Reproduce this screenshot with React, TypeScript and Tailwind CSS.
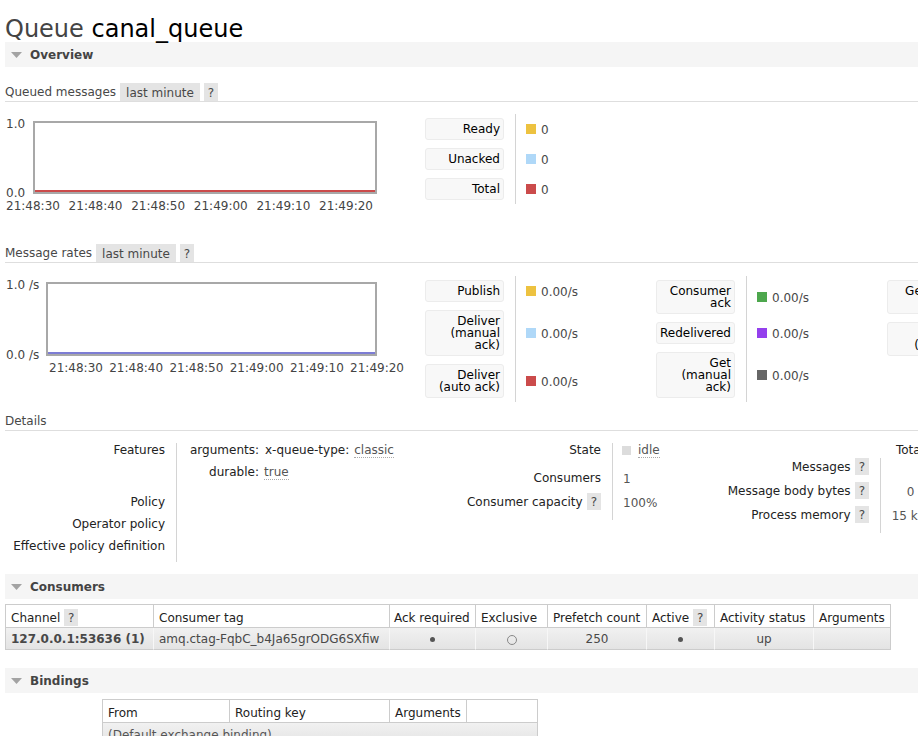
import React from 'react'

const times = ['21:48:30', '21:48:40', '21:48:50', '21:49:00', '21:49:10', '21:49:20']

function SectionHeader({ title }: { title: string }) {
  return (
    <div className="flex items-center h-[25px] bg-[#f5f5f5] pl-[6px] font-bold text-[#444]">
      <svg width="11" height="6" className="mr-[8px]">
        <polygon points="0,0 11,0 5.5,6" fill="#a3a3a3" />
      </svg>
      {title}
    </div>
  )
}

function Tag({ children, wide }: { children: React.ReactNode; wide?: boolean }) {
  return (
    <span
      className={
        wide
          ? 'inline-block h-[18px] leading-[20px] bg-[#e4e4e4] px-[6px]'
          : 'inline-block h-[18px] leading-[20px] bg-[#e4e4e4] px-[4px]'
      }
    >
      {children}
    </span>
  )
}

function Help() {
  return <span className="inline-block h-[17px] leading-[18px] bg-[#e4e4e4] px-[4px] text-[#484848] font-normal">?</span>
}

function SubHeading({ label, tags }: { label: string; tags?: boolean }) {
  return (
    <div className="flex items-center gap-[4px] h-[19px] leading-[19px] border-b border-[#dedede] pb-px">
      <span className="translate-y-[1px]">{label}</span>
      {tags && (
        <>
          <Tag wide>last minute</Tag>
          <Tag>?</Tag>
        </>
      )}
    </div>
  )
}

function LegendButton({ lines }: { lines: string[] }) {
  return (
    <div className="w-[79px] rounded-[3px] bg-[#f8f8f8] border border-[#ececec] text-right pr-[3px] py-[4px] leading-[12px] text-black whitespace-nowrap">
      {lines.map((l) => (
        <div key={l} className="h-[12px] leading-[13px]">
          {l}
        </div>
      ))}
    </div>
  )
}

type Item = { lines: string[]; color: string; value: string }

function LegendColumn({ items }: { items: Item[] }) {
  return (
    <div className="flex flex-col w-[231px] shrink-0">
      {items.map((it) => (
        <div key={it.lines.join(' ')} className="flex items-stretch">
          <div className="py-[4px] pr-[11px]">
            <LegendButton lines={it.lines} />
          </div>
          <div className="flex items-center gap-[5px] border-l border-[#d4d4d4] pl-[10px] flex-1">
            <span className="w-[10px] h-[10px]" style={{ backgroundColor: it.color }} />
            <span className="leading-[14px] pt-px">{it.value}</span>
          </div>
        </div>
      ))}
    </div>
  )
}

function QueuedChart() {
  return (
    <div className="relative w-[420px] h-[100px] shrink-0 text-[#444]">
      <span className="absolute left-[1px] top-[4px] leading-[12px]">1.0</span>
      <div className="absolute left-[28px] top-[7px] w-[344px] h-[73px] border-2 border-[#a8a8a8] bg-white">
        <div className="absolute left-0 right-0 bottom-0 h-[2px] bg-[#cb4b4b]" />
      </div>
      <span className="absolute left-[1px] top-[73px] leading-[12px]">0.0</span>
      <div className="absolute left-[1px] top-[86px] w-[367px] flex justify-between leading-[12px]">
        {times.map((t) => (
          <span key={t}>{t}</span>
        ))}
      </div>
    </div>
  )
}

function RatesChart() {
  return (
    <div className="relative w-[420px] h-[100px] shrink-0 text-[#444]">
      <span className="absolute left-[1px] top-[3px] leading-[12px]">1.0 /s</span>
      <div className="absolute left-[41px] top-[6px] w-[331px] h-[74px] border-2 border-[#a8a8a8] bg-white">
        <div className="absolute left-0 right-0 bottom-0 h-[2px] bg-[#7d7dd4]" />
      </div>
      <span className="absolute left-[1px] top-[73px] leading-[12px]">0.0 /s</span>
      <div className="absolute left-[44px] top-[86px] w-[355px] flex justify-between leading-[12px]">
        {times.map((t) => (
          <span key={t}>{t}</span>
        ))}
      </div>
    </div>
  )
}

function Dotted({ children }: { children: React.ReactNode }) {
  return <span className="border-b border-dotted border-[#aaa] leading-[14px] text-[#555]">{children}</span>
}

function Details() {
  return (
    <div className="flex mt-[12px]">
      {/* features / policies */}
      <div className="w-[435px] shrink-0 flex flex-col text-[#222]">
        <div className="flex h-[48px]">
          <div className="w-[171px] text-right pr-[11px] leading-[14px]">Features</div>
          <div className="border-l border-[#d4d4d4] pl-[12px] leading-[14px]">
            <div className="flex">
              <span className="w-[70px] text-right">arguments:</span>
              <span className="ml-[6px]">x-queue-type:</span>
              <span className="ml-[5px]">
                <Dotted>classic</Dotted>
              </span>
            </div>
            <div className="flex mt-[8px]">
              <span className="w-[70px] text-right">durable:</span>
              <span className="ml-[5px]">
                <Dotted>true</Dotted>
              </span>
            </div>
          </div>
        </div>
        {['Policy', 'Operator policy', 'Effective policy definition'].map((l, i) => (
          <div key={l} className={i === 2 ? 'flex h-[27px]' : 'flex h-[22px]'}>
            <div className="w-[171px] text-right pr-[11px] leading-[23px]">{l}</div>
            <div className="border-l border-[#d4d4d4] flex-1" />
          </div>
        ))}
      </div>

      {/* state */}
      <div className="w-[240px] shrink-0 flex flex-col text-[#222]">
        <div className="flex h-[28px]">
          <div className="w-[172px] text-right pr-[11px] leading-[14px]">State</div>
          <div className="border-l border-[#d4d4d4] pl-[9px] flex items-start gap-[7px] flex-1">
            <span className="w-[9px] h-[9px] mt-[3px] bg-[#dcdcdc]" />
            <Dotted>idle</Dotted>
          </div>
        </div>
        <div className="flex h-[22px]">
          <div className="w-[172px] text-right pr-[11px] leading-[14px]">Consumers</div>
          <div className="border-l border-[#d4d4d4] pl-[10px] flex-1 leading-[16px] text-[#555]">1</div>
        </div>
        <div className="flex h-[27px]">
          <div className="w-[172px] flex justify-end items-start gap-[4px] pr-[11px]">
            <span className="leading-[19px]">Consumer capacity</span>
            <Help />
          </div>
          <div className="border-l border-[#d4d4d4] pl-[10px] flex-1 leading-[21px] text-[#555]">100%</div>
        </div>
      </div>

      {/* totals */}
      <div className="w-[260px] shrink-0 flex flex-col text-[#222]">
        <div className="flex h-[15px]">
          <div className="w-[200px]" />
          <div className="w-[60px] text-center leading-[14px]">Total</div>
        </div>
        {[
          ['Messages', ''],
          ['Message body bytes', '0'],
          ['Process memory', '15 kiB'],
        ].map(([l, v], i) => (
          <div key={l} className={i === 2 ? 'flex h-[27px]' : 'flex h-[24px]'}>
            <div className="w-[200px] flex justify-end items-start gap-[4px] pr-[11px]">
              <span className="leading-[18px]">{l}</span>
              <Help />
            </div>
            <div className="w-[60px] border-l border-[#d4d4d4] text-center leading-[21px] text-[#555]">{v}</div>
          </div>
        ))}
      </div>
    </div>
  )
}

function Dot() {
  return <span className="inline-block w-[5px] h-[5px] rounded-full bg-[#555] align-middle" />
}

function Ring() {
  return <span className="inline-block w-[10px] h-[10px] rounded-full border border-[#888] align-middle" />
}

function ConsumersTable() {
  const th =
    'border-r border-b border-[#cccccc] font-normal text-left px-[5px] pt-[3px] h-[23px] text-[#222] whitespace-nowrap'
  const td =
    'border-r border-b border-r-[#f7f7f7] border-b-[#cccccc] h-[22px] px-[5px] pt-px text-[#484848] whitespace-nowrap'
  return (
    <table className="mt-[5px] border-separate border-spacing-0 table-fixed w-[885px] border-l border-t border-[#cccccc]">
      <colgroup>
        <col className="w-[148px]" />
        <col className="w-[236px]" />
        <col className="w-[86px]" />
        <col className="w-[72px]" />
        <col className="w-[99px]" />
        <col className="w-[68px]" />
        <col className="w-[99px]" />
        <col className="w-[77px]" />
      </colgroup>
      <thead>
        <tr>
          <th className={th}>
            Channel <Help />
          </th>
          <th className={th}>Consumer tag</th>
          <th className={th + ' !px-[4px]'}>Ack required</th>
          <th className={th}>Exclusive</th>
          <th className={th}>Prefetch count</th>
          <th className={th}>
            Active <Help />
          </th>
          <th className={th}>Activity status</th>
          <th className={th}>Arguments</th>
        </tr>
      </thead>
      <tbody className="bg-gradient-to-b from-[#f1f1f1] to-[#e3e3e3]">
        <tr>
          <td className={td + ' font-bold text-[#222]'}>127.0.0.1:53636 (1)</td>
          <td className={td}>amq.ctag-FqbC_b4Ja65grODG6SXfiw</td>
          <td className={td + ' text-center'}>
            <Dot />
          </td>
          <td className={td + ' text-center'}>
            <Ring />
          </td>
          <td className={td + ' text-center'}>250</td>
          <td className={td + ' text-center'}>
            <Dot />
          </td>
          <td className={td + ' text-center'}>up</td>
          <td className="border-r border-b border-[#cccccc] h-[22px]" />
        </tr>
      </tbody>
    </table>
  )
}

function BindingsTable() {
  const th =
    'border-r border-b border-[#cccccc] font-normal text-left px-[5px] pt-[3px] h-[23px] text-[#222] whitespace-nowrap'
  return (
    <table className="mt-[6px] ml-[97px] border-separate border-spacing-0 table-fixed w-[435px] border-l border-t border-[#cccccc]">
      <colgroup>
        <col className="w-[127px]" />
        <col className="w-[160px]" />
        <col className="w-[77px]" />
        <col className="w-[71px]" />
      </colgroup>
      <thead>
        <tr>
          <th className={th}>From</th>
          <th className={th}>Routing key</th>
          <th className={th}>Arguments</th>
          <th className={th} />
        </tr>
      </thead>
      <tbody className="bg-gradient-to-b from-[#f1f1f1] to-[#e3e3e3]">
        <tr>
          <td colSpan={4} className="border-r border-b border-[#cccccc] h-[22px] px-[5px] pt-[2px] text-[#555]">
            (Default exchange binding)
          </td>
        </tr>
      </tbody>
    </table>
  )
}

export default function App() {
  return (
    <div className="w-[918px] h-[736px] overflow-hidden bg-white font-['DejaVu_Sans',Verdana,sans-serif] text-[12px] text-[#484848]">
      <div className="w-[1040px] pl-[5px]">
        <h1 className="pt-[15px] text-[24px] leading-[28px] h-[42px] font-normal text-[#444]">
          Queue <span className="text-black">canal_queue</span>
        </h1>

        <SectionHeader title="Overview" />

        <div className="mt-[16px]">
          <SubHeading label="Queued messages" tags />
        </div>
        <div className="flex mt-[12px]">
          <QueuedChart />
          <LegendColumn
            items={[
              { lines: ['Ready'], color: '#edc240', value: '0' },
              { lines: ['Unacked'], color: '#afd8f8', value: '0' },
              { lines: ['Total'], color: '#cb4b4b', value: '0' },
            ]}
          />
        </div>

        <div className="mt-[30px]">
          <SubHeading label="Message rates" tags />
        </div>
        <div className="flex mt-[13px]">
          <RatesChart />
          <LegendColumn
            items={[
              { lines: ['Publish'], color: '#edc240', value: '0.00/s' },
              { lines: ['Deliver', '(manual', 'ack)'], color: '#afd8f8', value: '0.00/s' },
              { lines: ['Deliver', '(auto ack)'], color: '#cb4b4b', value: '0.00/s' },
            ]}
          />
          <LegendColumn
            items={[
              { lines: ['Consumer', 'ack'], color: '#4da74d', value: '0.00/s' },
              { lines: ['Redelivered'], color: '#9440ed', value: '0.00/s' },
              { lines: ['Get', '(manual', 'ack)'], color: '#666666', value: '0.00/s' },
            ]}
          />
          <LegendColumn
            items={[
              { lines: ['Get (auto', 'ack)'], color: '#afd8f8', value: '0.00/s' },
              { lines: ['Get', '(empty)'], color: '#cb4b4b', value: '0.00/s' },
            ]}
          />
        </div>

        <div className="mt-[10px]">
          <SubHeading label="Details" />
        </div>
        <Details />

        <div className="mt-[12px]">
          <SectionHeader title="Consumers" />
        </div>
        <ConsumersTable />

        <div className="mt-[18px]">
          <SectionHeader title="Bindings" />
        </div>
        <BindingsTable />
      </div>
    </div>
  )
}
